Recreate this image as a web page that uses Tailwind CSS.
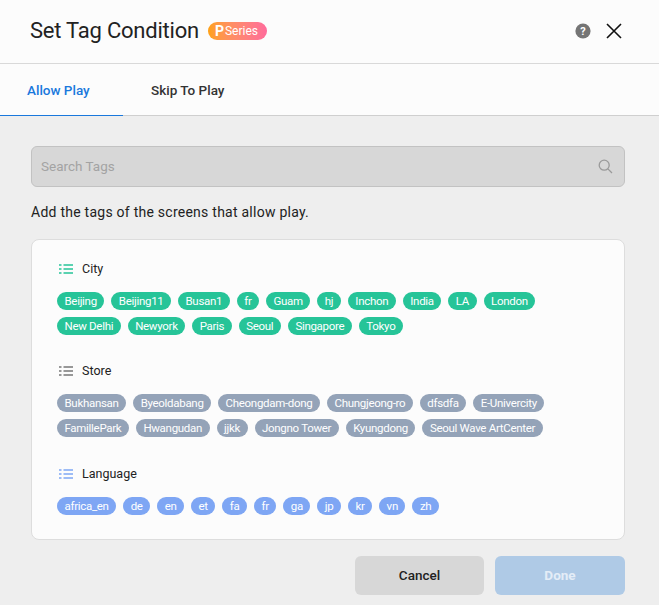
<!DOCTYPE html>
<html lang="en">
<head>
  <meta charset="UTF-8">
  <title>Set Tag Condition</title>
  <script src="https://cdn.jsdelivr.net/npm/@tailwindcss/browser@4"></script>
</head>
<body class="w-[659px] h-[605px] overflow-hidden bg-[#eeeeee] font-['Roboto',sans-serif] text-[#1a1a1a]">
  <!-- Header -->
  <header class="h-[64px] bg-[#fcfcfc] border-b border-[#d9d9d9] flex items-center pl-[30px] pr-[37px] pb-[2px]">
    <h1 class="text-[22px] tracking-[-0.22px] leading-none text-[#222]">Set Tag Condition</h1>
    <span class="ml-[9px] h-[18px] w-[59px] rounded-full bg-gradient-to-r from-[#ffa10f] to-[#ff6b9b] flex items-center pl-[7px] text-white text-[12px] leading-none">
      <b class="text-[14px] mr-[1px]">P</b>Series
    </span>
    <div class="ml-auto flex items-center gap-[15px]">
      <svg class="w-[16px] h-[16px]" viewBox="0 0 16 16">
        <circle cx="8" cy="8" r="7.6" fill="#757575"/>
        <text x="8" y="12" text-anchor="middle" fill="#fff" font-size="11" font-weight="700" font-family="Roboto">?</text>
      </svg>
      <svg class="w-[16px] h-[16px]" viewBox="0 0 16 16" fill="none" stroke="#111" stroke-width="1.6">
        <path d="M1 1l14 14M15 1L1 15"/>
      </svg>
    </div>
  </header>

  <!-- Tabs -->
  <nav class="h-[52px] bg-[#fcfcfc] border-b border-[#cfcfcf] flex text-[13.5px]">
    <a class="w-[123px] h-[52px] pl-[27px] pt-[2px] border-b border-[#1a78dc] flex items-center font-medium text-[#1a78dc]">Allow Play</a>
    <a class="ml-[28px] pt-[2px] flex items-center font-medium text-[#333]">Skip To Play</a>
  </nav>

  <main class="pl-[31px] pr-[34px] pt-[30px]">
    <!-- Search -->
    <div class="h-[41px] rounded-[6px] bg-[#d7d7d7] border border-[#c2c2c2] flex items-center pl-[9px] pr-[11px]">
      <span class="text-[13.5px] text-[#a3a3a3]">Search Tags</span>
      <svg class="ml-auto w-[15px] h-[15px]" viewBox="0 0 15 15" fill="none" stroke="#9a9a9a" stroke-width="1.3">
        <circle cx="6.2" cy="6.2" r="5"/><path d="M9.9 9.9L14 14"/>
      </svg>
    </div>
    <p class="mt-[15px] text-[14px] leading-[20px] tracking-[0.25px] text-[#222]">Add the tags of the screens that allow play.</p>

    <!-- Tag groups -->
    <section class="mt-[17px] h-[301px] rounded-[8px] bg-[#fcfcfc] border border-[#dddddd] pl-[25px] pr-[20px] pt-[20px] flex flex-col">
      <div>
        <div class="ml-[2px] flex items-center h-[18px] text-[12.5px] text-[#222]">
          <svg class="w-[14px] h-[10px] mr-[9px]" viewBox="0 0 14 10" fill="none" stroke="#26c498" stroke-width="1.3">
            <path d="M0 1h2.5M4.5 1H14M0 5h2.5M4.5 5H14M0 9h2.5M4.5 9H14"/>
          </svg>City
        </div>
        <div class="mt-[14px] flex flex-wrap gap-[7px] text-[11.5px] tracking-[-0.3px] leading-[18px] text-white">
          <span class="h-[18px] px-[7.5px] rounded-full bg-[#26c498]">Beijing</span>
          <span class="h-[18px] px-[7.5px] rounded-full bg-[#26c498]">Beijing11</span>
          <span class="h-[18px] px-[7.5px] rounded-full bg-[#26c498]">Busan1</span>
          <span class="h-[18px] px-[7.5px] rounded-full bg-[#26c498]">fr</span>
          <span class="h-[18px] px-[7.5px] rounded-full bg-[#26c498]">Guam</span>
          <span class="h-[18px] px-[7.5px] rounded-full bg-[#26c498]">hj</span>
          <span class="h-[18px] px-[7.5px] rounded-full bg-[#26c498]">Inchon</span>
          <span class="h-[18px] px-[7.5px] rounded-full bg-[#26c498]">India</span>
          <span class="h-[18px] px-[7.5px] rounded-full bg-[#26c498]">LA</span>
          <span class="h-[18px] px-[7.5px] rounded-full bg-[#26c498]">London</span>
          <span class="h-[18px] px-[7.5px] rounded-full bg-[#26c498]">New Delhi</span>
          <span class="h-[18px] px-[7.5px] rounded-full bg-[#26c498]">Newyork</span>
          <span class="h-[18px] px-[7.5px] rounded-full bg-[#26c498]">Paris</span>
          <span class="h-[18px] px-[7.5px] rounded-full bg-[#26c498]">Seoul</span>
          <span class="h-[18px] px-[7.5px] rounded-full bg-[#26c498]">Singapore</span>
          <span class="h-[18px] px-[7.5px] rounded-full bg-[#26c498]">Tokyo</span>
        </div>
      </div>

      <div class="mt-[27px]">
        <div class="ml-[2px] flex items-center h-[18px] text-[12.5px] text-[#222]">
          <svg class="w-[14px] h-[10px] mr-[9px]" viewBox="0 0 14 10" fill="none" stroke="#777" stroke-width="1.3">
            <path d="M0 1h2.5M4.5 1H14M0 5h2.5M4.5 5H14M0 9h2.5M4.5 9H14"/>
          </svg>Store
        </div>
        <div class="mt-[14px] flex flex-wrap gap-[7px] text-[11.5px] tracking-[-0.3px] leading-[18px] text-white">
          <span class="h-[18px] px-[7.5px] rounded-full bg-[#94a3b8]">Bukhansan</span>
          <span class="h-[18px] px-[7.5px] rounded-full bg-[#94a3b8]">Byeoldabang</span>
          <span class="h-[18px] px-[7.5px] rounded-full bg-[#94a3b8]">Cheongdam-dong</span>
          <span class="h-[18px] px-[7.5px] rounded-full bg-[#94a3b8]">Chungjeong-ro</span>
          <span class="h-[18px] px-[7.5px] rounded-full bg-[#94a3b8]">dfsdfa</span>
          <span class="h-[18px] px-[7.5px] rounded-full bg-[#94a3b8]">E-Univercity</span>
          <span class="h-[18px] px-[7.5px] rounded-full bg-[#94a3b8]">FamillePark</span>
          <span class="h-[18px] px-[7.5px] rounded-full bg-[#94a3b8]">Hwangudan</span>
          <span class="h-[18px] px-[7.5px] rounded-full bg-[#94a3b8]">jjkk</span>
          <span class="h-[18px] px-[7.5px] rounded-full bg-[#94a3b8]">Jongno Tower</span>
          <span class="h-[18px] px-[7.5px] rounded-full bg-[#94a3b8]">Kyungdong</span>
          <span class="h-[18px] px-[7.5px] rounded-full bg-[#94a3b8]">Seoul Wave ArtCenter</span>
        </div>
      </div>

      <div class="mt-[28px]">
        <div class="ml-[2px] flex items-center h-[18px] text-[12.5px] text-[#222]">
          <svg class="w-[14px] h-[10px] mr-[9px]" viewBox="0 0 14 10" fill="none" stroke="#7ea6f4" stroke-width="1.3">
            <path d="M0 1h2.5M4.5 1H14M0 5h2.5M4.5 5H14M0 9h2.5M4.5 9H14"/>
          </svg>Language
        </div>
        <div class="mt-[14px] flex flex-wrap gap-[7px] text-[11.5px] tracking-[-0.3px] leading-[18px] text-white">
          <span class="h-[18px] px-[7.5px] rounded-full bg-[#7ea6f4]">africa_en</span>
          <span class="h-[18px] px-[7.5px] rounded-full bg-[#7ea6f4]">de</span>
          <span class="h-[18px] px-[7.5px] rounded-full bg-[#7ea6f4]">en</span>
          <span class="h-[18px] px-[7.5px] rounded-full bg-[#7ea6f4]">et</span>
          <span class="h-[18px] px-[7.5px] rounded-full bg-[#7ea6f4]">fa</span>
          <span class="h-[18px] px-[7.5px] rounded-full bg-[#7ea6f4]">fr</span>
          <span class="h-[18px] px-[7.5px] rounded-full bg-[#7ea6f4]">ga</span>
          <span class="h-[18px] px-[7.5px] rounded-full bg-[#7ea6f4]">jp</span>
          <span class="h-[18px] px-[7.5px] rounded-full bg-[#7ea6f4]">kr</span>
          <span class="h-[18px] px-[7.5px] rounded-full bg-[#7ea6f4]">vn</span>
          <span class="h-[18px] px-[7.5px] rounded-full bg-[#7ea6f4]">zh</span>
        </div>
      </div>
    </section>

    <!-- Footer buttons -->
    <div class="mt-[16px] flex justify-end gap-[11px] text-[13.5px] font-medium">
      <button class="w-[129px] h-[39px] rounded-[6px] bg-[#d7d7d7] text-[#222]">Cancel</button>
      <button class="w-[130px] h-[39px] rounded-[6px] bg-[#afcae6] text-[#e4edf7] font-bold">Done</button>
    </div>
  </main>
</body>
</html>
